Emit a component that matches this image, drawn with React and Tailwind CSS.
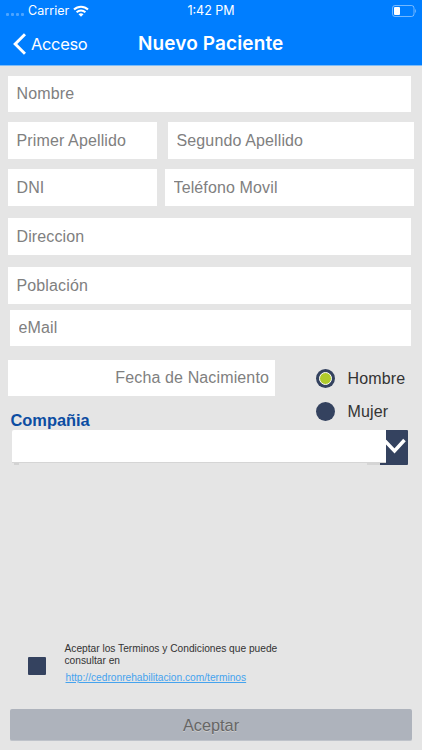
import { useState } from 'react';

const genders = ['Hombre', 'Mujer'];

function StatusBar() {
  return (
    <div className="h-[21px] flex items-center text-white text-[12.5px] leading-[21px]">
      <div className="flex-1 flex items-center pl-[6px]">
        <div className="flex gap-[2px] pt-[7px] mr-[4px]">
          {[0, 1, 2, 3].map((dot) => (
            <span key={dot} className="w-[3px] h-[3px] rounded-[1px] bg-white/30" />
          ))}
        </div>
        <span className="tracking-[0.05px] w-[45px] whitespace-nowrap">Carrier</span>
        <svg width="16" height="12" viewBox="0 0 16 12" fill="none" stroke="white">
          <path d="M1 4.6C5 .7 11 .7 15 4.6" strokeWidth="2.1" />
          <path d="M3.6 7.3c2.5-2.4 6.3-2.4 8.8 0" strokeWidth="2" />
          <path d="M8 11.7 5.5 9.2c1.4-1.3 3.6-1.3 5 0z" fill="white" stroke="none" />
        </svg>
      </div>
      <span className="whitespace-nowrap">1:42 PM</span>
      <div className="flex-1 flex justify-end pl-[1px] pr-[5px]">
        <svg width="25" height="12" viewBox="0 0 25 12">
          <rect x="0.5" y="0.5" width="21.5" height="11" rx="2.5" fill="none" stroke="white" strokeOpacity="0.45" />
          <rect x="2" y="2" width="6" height="8" rx="1" fill="white" />
          <path d="M23.2 4v4c1.2-.6 1.2-3.4 0-4z" fill="white" fillOpacity="0.45" />
        </svg>
      </div>
    </div>
  );
}

function Header() {
  return (
    <header className="h-[66px] bg-[#007eff] border-b border-[#7dbcf8] font-['Inter',sans-serif]">
      <StatusBar />
      <div className="h-[44px] pt-[2px] grid grid-cols-[138px_1fr] items-center text-white">
        <button className="flex items-center gap-[5px] pl-[13px]">
          <svg width="13" height="22" viewBox="0 0 13 22" fill="none" stroke="white" strokeWidth="3">
            <path d="M12 1.2 2.2 11 12 20.8" />
          </svg>
          <span className="text-[16.5px] tracking-[-0.35px]">Acceso</span>
        </button>
        <h1 className="text-[19px] tracking-[0.12px] font-semibold whitespace-nowrap">Nuevo Paciente</h1>
      </div>
    </header>
  );
}

function Field({ label, className = '' }) {
  return (
    <input
      aria-label={label}
      placeholder={label}
      className={`block min-w-0 shrink-0 bg-white pl-[8.5px] text-[16px] tracking-[0.13px] text-[#333] placeholder:text-[#808080] placeholder:opacity-100 outline-none ${className}`}
    />
  );
}

export default function App() {
  const [gender, setGender] = useState('Hombre');
  const [accepted, setAccepted] = useState(false);

  return (
    <div className="w-[422px] h-[750px] overflow-hidden flex flex-col bg-[#e5e5e5] font-['Liberation_Sans',sans-serif]">
      <Header />

      <main className="flex-1 flex flex-col pl-[8px]">
        <Field label="Nombre" className="mt-[10px] h-[36px] w-[403px]" />
        <div className="mt-[10px] h-[37px] flex gap-[11px]">
          <Field label="Primer Apellido" className="w-[149px]" />
          <Field label="Segundo Apellido" className="w-[246px]" />
        </div>
        <div className="mt-[10px] h-[37px] flex gap-[8px]">
          <Field label="DNI" className="w-[149px]" />
          <Field label="Teléfono Movil" className="w-[249px]" />
        </div>
        <Field label="Direccion" className="mt-[12px] h-[37px] w-[403px]" />
        <Field label="Población" className="mt-[12px] h-[37px] w-[403px]" />
        <Field label="eMail" className="mt-[6px] ml-[2px] h-[36px] w-[401px]" />

        <div className="mt-[14px] h-[70px] flex justify-between">
          <div className="flex flex-col">
            <Field label="Fecha de Nacimiento" className="h-[36px] w-[267px] text-right pr-[6px]" />
            <label className="mt-[14px] ml-[2.5px] shrink-0 text-[16.4px] leading-[20px] font-bold text-[#0c4da2]">Compañia</label>
          </div>
          <div className="w-[106.5px] flex flex-col pt-[2px]">
            {genders.map((item) => (
              <button key={item} onClick={() => setGender(item)} className="h-[33px] flex items-center gap-[13px] text-[16px] text-[#333]">
                <span className="size-[19px] shrink-0 rounded-full bg-[#34425f] flex items-center justify-center">
                  {gender === item && <span className="size-[13px] rounded-full bg-[#b0cb2c] border-[1.5px] border-white" />}
                </span>
                <span className="tracking-[0.15px] pt-[1px]">{item}</span>
              </button>
            ))}
          </div>
        </div>

        <div className="ml-[4px] w-[397px] h-[36px] flex">
          <div className="w-[374px] flex flex-col">
            <div className="h-[33px] bg-white border-b border-[#d5d5d5] rounded-tl-[2px]" />
            {/* strip of the combo's lower edge under the text box */}
            <div className="h-[2px] flex justify-between pl-[2px]">
              <span className="w-[5px] bg-[#d2d2d2]" />
              <span className="flex">
                <span className="w-[13px] bg-[#d5d5d5]" />
                <span className="w-[6px] bg-[#34425f]" />
              </span>
            </div>
          </div>
          <button className="w-[22px] h-[35px] bg-[#34425f] rounded-r-[1px]">
            <svg width="22" height="35" viewBox="0 0 22 35" fill="none" stroke="white" strokeWidth="3.5">
              <path d="M-1 11 8.5 21 18.5 10" />
            </svg>
          </button>
        </div>

        <div className="mt-auto flex items-start pl-[20px]">
          <button
            aria-label="Aceptar los terminos"
            onClick={() => setAccepted(!accepted)}
            className={`mt-[14px] size-[18px] rounded-[1px] ${accepted ? 'bg-[#b0cb2c]' : 'bg-[#34425f]'}`}
          />
          <div className="ml-[18.5px] w-[230px] text-[10.2px] leading-[12px] text-[#333]">
            <p>Aceptar los Terminos y Condiciones que puede<br />consultar en</p>
            <a href="#terminos" className="block mt-[5px] -mb-[1px] ml-[1px] text-[#45a3ee] underline">
              http://cedronrehabilitacion.com/terminos
            </a>
          </div>
        </div>

        <button className="mt-[26px] mb-[9px] ml-[2px] h-[32px] w-[402px] pt-[2px] rounded-[2px] bg-[#aeb3bc] border-b border-[#bfc3ca] text-[16.3px] text-[#666] [text-shadow:0_1px_0_#ccc]">
          Aceptar
        </button>
      </main>
    </div>
  );
}
